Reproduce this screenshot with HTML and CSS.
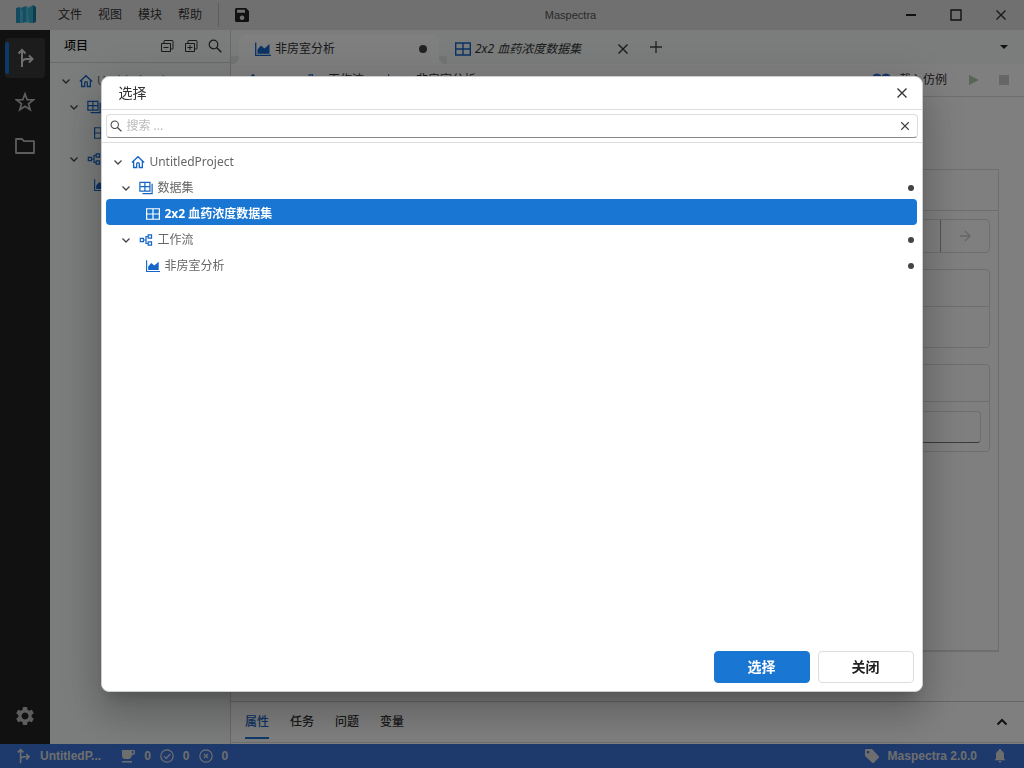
FILE: index.html
```html
<!DOCTYPE html>
<html lang="zh-CN">
<head>
<meta charset="utf-8">
<meta name="viewport" content="width=device-width, initial-scale=1">
<title>Maspectra</title>
<link rel="stylesheet" href="styles.css">
</head>
<body>
<svg class="defs" aria-hidden="true">
  <symbol id="home" viewBox="0 0 16 16"><path d="M1 8.500 8 2l7 6.500M3 7v7.300h3.500V10q0-1.200 1.500-1.200T9.500 10v4.300H13V7" fill="none" stroke="currentColor" stroke-width="1.500"/></symbol>
  <symbol id="tables" viewBox="0 0 16 16"><path d="M1 1.500h11.500v10H1zM6.750 1.500v10M1 6.500h11.500M15 3v11.500H4" fill="none" stroke="currentColor" stroke-width="1.400"/></symbol>
  <symbol id="table" viewBox="0 0 16 16"><path d="M.7 2h14.600v12H.7zM8 2v12M.7 8h14.600" fill="none" stroke="currentColor" stroke-width="1.400"/></symbol>
  <symbol id="flow" viewBox="0 0 16 16"><path d="M1.500 6.200h3.600v3.600H1.500zM10.500 2.200h3.800v3.600h-3.800zM10.500 10.200h3.800v3.600h-3.800zM5 8h3M10.500 4H8v8h2.500" fill="none" stroke="currentColor" stroke-width="1.400"/></symbol>
  <symbol id="chart" viewBox="0 0 16 16"><path d="M.7 1.500v12.800H16" fill="none" stroke="currentColor" stroke-width="1.300"/><path d="M2.500 12.700V8.500l3.500-4 3.500 3L14.500 3v9.700z" fill="currentColor"/></symbol>
  <symbol id="down" viewBox="0 0 10 10"><path d="M1.500 3.500 5 7l3.500-3.500" fill="none" stroke="currentColor" stroke-width="1.300"/></symbol>
  <symbol id="cross" viewBox="0 0 12 12"><path d="m1.500 1.500 9 9m0-9-9 9" fill="none" stroke="currentColor" stroke-width="1.400"/></symbol>
  <symbol id="search" viewBox="0 0 14 14"><circle cx="5.500" cy="5.500" r="4.300" fill="none" stroke="currentColor" stroke-width="1.200"/><path d="m8.500 8.500 4.800 4.800" stroke="currentColor" stroke-width="1.500"/></symbol>
  <symbol id="branch" viewBox="0 0 20 20"><path d="M7 19V2M3.500 5.500 7 2l3.500 3.500M7 15q0-4 5-4h5M14 7.500l3.500 3.500-3.500 3.500" fill="none" stroke="currentColor" stroke-width="2"/></symbol>
</svg>
<div class="app">
  <header class="titlebar">
    <svg class="logo" viewBox="0 0 20 20"><path d="M0 3l4-1v16H0z" fill="#2795c0"/><path d="m4 2 3 2v14H4z" fill="#4ebcd8"/><path d="m5 3 5-2v5l-3 3V6z" fill="#2b9cc5"/><path d="M7 8l3-2v11l-3 1z" fill="#2b9cc5"/><path d="m10 1 3 2v14l-3 1z" fill="#50bdd8"/><path d="m12 3 5-3v18h-4z" fill="#39afd0"/><path d="m17 0 3 2v15l-3 1z" fill="#1b789f"/></svg>
    <nav class="menu"><button>文件</button><button>视图</button><button>模块</button><button>帮助</button></nav>
    <button class="save" aria-label="保存"><svg viewBox="0 0 14 14"><path d="M1.500 0H11l3 3v9.500q0 1.500-1.500 1.500h-11Q0 14 0 12.500v-11Q0 0 1.500 0zM2 1.800v3h8v-3zM7 7.500a2.300 2.300 0 1 0 .1 0z" fill="#222" fill-rule="evenodd"/></svg></button>
    <span class="apptitle">Maspectra</span>
    <div class="winbtns">
      <button aria-label="最小化"><svg viewBox="0 0 12 12"><path d="M1 6h10" stroke="#222" stroke-width="2"/></svg></button>
      <button aria-label="最大化"><svg viewBox="0 0 12 12"><path d="M1 1h10v10H1z" fill="none" stroke="#222" stroke-width="1.400"/></svg></button>
      <button aria-label="关闭窗口"><svg viewBox="0 0 12 12"><use href="#cross"/></svg></button>
    </div>
  </header>
  <div class="body">
    <nav class="activity">
      <button class="act active" aria-label="项目"><svg class="i20"><use href="#branch"/></svg></button>
      <button class="act" aria-label="收藏"><svg class="i20" viewBox="0 0 20 20"><path d="m10 1.800 2.200 5.900 6.200.2-4.900 3.900 1.700 6L10 14.300l-5.200 3.500 1.700-6L1.600 7.900l6.200-.2z" fill="none" stroke="currentColor" stroke-width="1.700"/></svg></button>
      <button class="act" aria-label="文件夹"><svg class="i20" viewBox="0 0 20 20"><path d="M1 3h6l2 2.200h10V17H1z" fill="none" stroke="currentColor" stroke-width="1.800" stroke-linejoin="round"/></svg></button>
      <button class="act last" aria-label="设置"><svg class="i20" viewBox="0 0 20 20"><path d="M8 1h4l.5 2.800 1.700 1 2.600-1 2 3.400-2.200 1.800v2l2.200 1.800-2 3.400-2.600-1-1.700 1L12 19H8l-.5-2.800-1.700-1-2.600 1-2-3.400L3.400 11V9L1.200 7.200l2-3.400 2.600 1 1.700-1zM10 6.500a3.500 3.500 0 1 0 .1 0z" fill="currentColor" fill-rule="evenodd"/></svg></button>
    </nav>
    <aside class="side">
      <div class="sidehead"><h2>项目</h2>
        <button aria-label="全部折叠"><svg viewBox="0 0 14 14"><path d="M4 4.500V2q0-.5.500-.5h8q.5 0 .5.500v7.500q0 .5-.5.500H10.500M1.500 4.500h9v8h-9zM3.500 8.500h5" fill="none" stroke="currentColor"/></svg></button>
        <button aria-label="全部展开"><svg viewBox="0 0 14 14"><path d="M4 4.500V2q0-.5.500-.5h8q.5 0 .5.500v7.500q0 .5-.5.500H10.500M1.500 4.500h9v8h-9zM3.500 8.500h5M6 6v5" fill="none" stroke="currentColor"/></svg></button>
        <button aria-label="搜索项目"><svg viewBox="0 0 14 14"><use href="#search"/></svg></button>
      </div>
      <ul class="tree">
        <li class="row"><svg class="chev"><use href="#down"/></svg><svg class="ic"><use href="#home"/></svg><span>UntitledProject</span></li>
        <li class="row l1"><svg class="chev"><use href="#down"/></svg><svg class="ic"><use href="#tables"/></svg><span>数据集</span></li>
        <li class="row l2"><svg class="ic"><use href="#table"/></svg><span>2x2 血药浓度数据集</span></li>
        <li class="row l1"><svg class="chev"><use href="#down"/></svg><svg class="ic"><use href="#flow"/></svg><span>工作流</span></li>
        <li class="row l2"><svg class="ic"><use href="#chart"/></svg><span>非房室分析</span></li>
      </ul>
    </aside>
    <main class="main">
      <div class="tabs">
        <div class="tab on"><svg class="i16"><use href="#chart"/></svg><span>非房室分析</span><i class="dot"></i></div>
        <div class="tab"><svg class="i16"><use href="#table"/></svg><em>2x2 血药浓度数据集</em><button aria-label="关闭标签"><svg viewBox="0 0 12 12"><use href="#cross"/></svg></button></div>
        <button class="add" aria-label="新标签"><svg viewBox="0 0 12 12"><path d="M6 0v12M0 6h12" stroke="#444" stroke-width="1.300"/></svg></button>
        <button class="more" aria-label="标签列表"><svg viewBox="0 0 8 4"><path d="M0 0h8L4 4z" fill="#222"/></svg></button>
      </div>
      <div class="toolbar">
        <div class="crumbs">
          <div class="crumb"><svg class="ic"><use href="#home"/></svg></div>
          <div class="crumb"><svg class="ic"><use href="#flow"/></svg><span>工作流</span></div>
          <div class="crumb"><svg class="ic"><use href="#chart"/></svg><span>非房室分析</span></div>
        </div>
        <button class="load"><svg class="i18" viewBox="0 0 18 14"><path d="M0 2q4-3 8 0v11H0zM9 2q4-3 8 0v11H9z" fill="#2c6ed5"/></svg>载入仿例</button>
        <button class="play" aria-label="运行"><svg viewBox="0 0 10 10"><path d="M0 0l10 5-10 5z" fill="#b5c8b1"/></svg></button>
        <button class="stop" aria-label="停止"></button>
      </div>
      <div class="content">
        <section class="card">
          <div class="cardhead"></div>
          <div class="cardbody">
            <div class="picker"><span></span><button aria-label="前往"><svg viewBox="0 0 12 12"><path d="M1 6h10M6 1l5 5-5 5" fill="none" stroke="#ccc" stroke-width="1.300"/></svg></button></div>
            <div class="group"><div class="ghead"></div><div class="gshort"></div></div>
            <div class="group"><div class="ghead"></div><div class="gfield"><input type="text" aria-label="参数"></div></div>
          </div>
        </section>
      </div>
      <div class="panel">
        <div class="ptabs"><button class="on">属性</button><button>任务</button><button>问题</button><button>变量</button><button class="up" aria-label="展开面板"><svg viewBox="0 0 12 12"><path d="m1.500 8.500 4.500-4.500 4.500 4.500" fill="none" stroke="#222" stroke-width="2"/></svg></button></div>
      </div>
    </main>
  </div>
  <footer class="status">
    <svg class="i16 br"><use href="#branch"/></svg><span class="proj">UntitledP...</span>
    <svg class="i14" viewBox="0 0 14 14"><path d="M1 1h12q1 0 1 1v2q0 2-3 2-1 4-3 4H4q-3 0-3-4zm10 1v2.500h1.500V2zM1 12h10v1.500H1z" fill="currentColor" fill-rule="evenodd"/></svg><span>0</span>
    <svg class="i14" viewBox="0 0 14 14"><circle cx="7" cy="7" r="6.200" fill="none" stroke="currentColor" stroke-width="1.200"/><path d="m4 7.200 2.200 2.300L10.200 5" fill="none" stroke="currentColor" stroke-width="1.200"/></svg><span>0</span>
    <svg class="i14" viewBox="0 0 14 14"><circle cx="7" cy="7" r="6.200" fill="none" stroke="currentColor" stroke-width="1.200"/><path d="m5 5 4 4m0-4L5 9" stroke="currentColor" stroke-width="1.200"/></svg><span>0</span>
    <svg class="i14 tag" viewBox="0 0 14 14"><path d="M1 0h6l7 7.500q.5.500 0 1L8.500 14q-.5.500-1 0L0 7V1q0-1 1-1zM3 1.800a1.300 1.300 0 1 0 .1 0z" fill="currentColor" fill-rule="evenodd"/></svg><span class="ver">Maspectra 2.0.0</span>
    <svg class="i12" viewBox="0 0 12 14"><path d="M5 0h2v1.500q3 .5 3 4.500v3.500l1.500 1.800H.5L2 9.500V6q0-4 3-4.500zM4.500 12h3q0 1.500-1.500 1.500T4.500 12z" fill="currentColor"/></svg>
  </footer>
</div>
<div class="backdrop">
  <div class="dialog" role="dialog" aria-modal="true" aria-labelledby="dlg">
    <div class="dhead"><h1 id="dlg">选择</h1><button aria-label="关闭对话框"><svg viewBox="0 0 12 12"><use href="#cross"/></svg></button></div>
    <div class="dsearch"><label class="box"><svg viewBox="0 0 14 14"><use href="#search"/></svg><input type="text" placeholder="搜索 ..." aria-label="搜索"><button aria-label="清除"><svg viewBox="0 0 12 12"><use href="#cross"/></svg></button></label></div>
    <ul class="tree dtree">
      <li class="row"><svg class="chev"><use href="#down"/></svg><svg class="ic"><use href="#home"/></svg><span>UntitledProject</span></li>
      <li class="row l1"><svg class="chev"><use href="#down"/></svg><svg class="ic"><use href="#tables"/></svg><span>数据集</span><i class="mark"></i></li>
      <li class="row l2 sel"><svg class="ic"><use href="#table"/></svg><span>2x2 血药浓度数据集</span></li>
      <li class="row l1"><svg class="chev"><use href="#down"/></svg><svg class="ic"><use href="#flow"/></svg><span>工作流</span><i class="mark"></i></li>
      <li class="row l2"><svg class="ic"><use href="#chart"/></svg><span>非房室分析</span><i class="mark"></i></li>
    </ul>
    <div class="dfoot"><button class="primary">选择</button><button>关闭</button></div>
  </div>
</div>
</body>
</html>
```
FILE: styles.css
```css
* { box-sizing: border-box; }
body { margin: 0; font: 12px/18px "Noto Sans", "Noto Sans CJK SC", sans-serif; color: #333; overflow: hidden; }
button { border: 0; padding: 0; background: none; font: inherit; color: inherit; display: flex; align-items: center; justify-content: center; }
svg { display: block; flex: none; }
h1, h2, ul { margin: 0; padding: 0; }
.defs { display: none; }
.i20 { width: 20px; height: 20px; }
.i18 { width: 18px; height: 14px; }
.i16 { width: 16px; height: 16px; }
.i14 { width: 14px; height: 14px; }
.i12 { width: 12px; height: 14px; }

.app { height: 100vh; display: flex; flex-direction: column; background: #fff; }
.titlebar { flex: none; height: 30px; display: flex; align-items: center; background: #e0e0e0; padding: 0 1px 0 16px; }
.logo { width: 20px; height: 20px; }
.menu { display: flex; gap: 16px; padding: 0 16px 0 22px; }
.save { height: 24px; border-left: 1px solid #bbb; padding-left: 16px; }
.save svg { width: 14px; height: 14px; }
.apptitle { flex: 1; text-align: center; font: 11px/14px "Liberation Sans", Arial, sans-serif; padding-left: 4px; color: #555; }
.winbtns { display: flex; }
.winbtns button { width: 45px; height: 30px; }
.winbtns svg { width: 12px; height: 12px; }

.body { flex: 1; min-height: 0; display: flex; }
.activity { flex: none; width: 50px; background: #222; color: #bbb; display: flex; flex-direction: column; align-items: center; gap: 4px; padding: 8px 0; }
.act { width: 40px; height: 40px; border-radius: 4px; }
.act.active { position: relative; background: #383838; color: #ddd; }
.act.active::before { content: ""; position: absolute; left: 0; top: 4px; bottom: 4px; width: 4px; border-radius: 2px; background: #1976d2; }
.act.last { margin-top: auto; }

.side { flex: none; width: 181px; background: #f6faf9; border-right: 1px solid #d0d4d3; overflow: hidden; }
.sidehead { height: 33px; display: flex; align-items: center; gap: 10px; padding: 0 8px 0 14px; border-bottom: 1px solid #d4d8d7; }
.sidehead h2 { flex: 1; font-size: 12px; font-weight: 500; color: #111; }
.sidehead svg { width: 14px; height: 14px; }
.tree { list-style: none; padding: 4px 4px; }
.side .tree { padding-top: 3px; }
.row { height: 26px; display: flex; align-items: center; gap: 4px; padding-top: 4px; padding-left: 7px; white-space: nowrap; color: #666; border-radius: 4px; }
.row.l1 { padding-left: 15px; }
.row.l2 { padding-left: 40px; }
.chev { width: 10px; height: 10px; margin-right: 4px; color: #444; }
.ic { width: 14px; height: 14px; color: #1565c8; }

.main { flex: 1; min-width: 0; display: flex; flex-direction: column; }
.tabs { flex: none; height: 34px; display: flex; align-items: center; background: #f6faf9; padding-left: 8px; }
.tab { height: 30px; align-self: flex-end; display: flex; align-items: center; gap: 4px; width: 200px; padding: 0 10px 0 16px; }
.tab svg.i16 { color: #1565c8; }
.tab.on { position: relative; background: #fff; border-radius: 8px 8px 0 0; padding-right: 12px; }
.tab.on::before, .tab.on::after { content: ""; position: absolute; bottom: 0; width: 8px; height: 24px; }
.tab.on::before { right: 100%; background: radial-gradient(circle at 0 16px, #e6eae9 8px, #fff 9px); clip-path: inset(16px 0 0 0); }
.tab.on::after { left: 100%; background: radial-gradient(circle at 8px 16px, #e6eae9 8px, #fff 9px); clip-path: inset(16px 0 0 0); }
.tab span, .tab em { flex: 1; white-space: nowrap; }
.dot { width: 8px; height: 8px; border-radius: 50%; background: #444; }
.tab button svg, .add svg { width: 12px; height: 12px; }
.add { padding-left: 11px; }
.more { margin-left: auto; padding-right: 16px; }
.more svg { width: 8px; height: 4px; }
.toolbar { flex: none; height: 33px; display: flex; align-items: center; border-bottom: 1px solid #ddd; padding: 0 15px; }
.crumbs { flex: 1; display: flex; align-items: center; gap: 24px; }
.crumb { display: flex; align-items: center; gap: 14px; }
.crumb:first-child { padding-right: 16px; }
.load { gap: 8px; }
.play { margin: 0 20px 0 22px; }
.play svg { width: 10px; height: 10px; }
.stop { width: 10px; height: 10px; background: #ccc; }
.content { flex: 1; min-height: 0; padding: 72px 25px 49px 24px; }
.card { height: 100%; border: 1px solid #ddd; border-bottom-width: 2px; }
.cardhead { height: 41px; border-bottom: 1px solid #ddd; }
.cardbody { padding: 8px; display: flex; flex-direction: column; gap: 16px; }
.picker { height: 34px; border: 1px solid #ddd; border-radius: 4px; display: flex; }
.picker span { flex: 1; border-right: 1px solid #aaa; }
.picker button { width: 48px; }
.picker svg { width: 12px; height: 12px; }
.group { border: 1px solid #ddd; border-radius: 4px; }
.ghead { height: 37px; border-bottom: 1px solid #ddd; }
.gshort { height: 40px; }
.gfield { padding: 9px 8px 8px; display: flex; }
.gfield input { flex: 1; height: 32px; border: 1px solid #ddd; border-bottom-color: #777; border-radius: 4px; }
.panel { flex: none; height: 43px; border-top: 1px solid #ccc; }
.ptabs { height: 41px; display: flex; align-items: center; gap: 21px; padding: 0 16px 0 14px; border-bottom: 1px solid #ddd; }
.ptabs button { height: 34px; padding-top: 2px; border-bottom: 2px solid transparent; font-weight: 500; }
.ptabs .on { color: #1565c0; border-bottom-color: #1976d2; }
.ptabs .up { margin-left: auto; }
.up svg { width: 12px; height: 12px; }

.status { flex: none; height: 24px; display: flex; align-items: center; background: #3c74d8; color: #ddd; font: bold 12px/16px "Liberation Sans", Arial, sans-serif; padding: 0 18px 0 15px; gap: 9px; }
.proj { margin-right: 11px; }
.tag { margin-left: auto; }
.ver { margin-right: 8px; }

.backdrop { position: fixed; inset: 0; background: rgba(0, 0, 0, .5); display: grid; place-items: center; }
.dialog { box-sizing: content-box; width: 80%; height: 80%; display: flex; flex-direction: column; background: #fff; border: 1px solid #ccc; border-radius: 8px; box-shadow: 0 11px 15px -7px rgba(0, 0, 0, .2), 0 24px 38px 3px rgba(0, 0, 0, .14), 0 9px 46px 8px rgba(0, 0, 0, .12); }
.dhead { flex: none; height: 33px; display: flex; align-items: center; justify-content: space-between; padding: 0 14px 0 16px; border-bottom: 1px solid #ddd; }
.dhead h1 { font-size: 14px; font-weight: 400; }
.dhead svg { width: 12px; height: 12px; }
.dsearch { flex: none; padding: 4px; border-bottom: 1px solid #ddd; }
.box { height: 24px; display: flex; align-items: center; border: 1px solid #ddd; border-bottom-color: #888; border-radius: 4px; padding: 0 7px 0 3px; gap: 4px; color: #444; }
.box svg { width: 12px; height: 12px; }
.box button svg { width: 10px; height: 10px; }
.box input { flex: 1; min-width: 0; border: 0; outline: 0; padding: 0; background: none; font: inherit; }
.box input::placeholder { color: #bbb; }
.dtree { flex: 1; padding-right: 5px; }
.row .mark { width: 6px; height: 6px; border-radius: 50%; background: #444; margin-left: auto; margin-right: 3px; }
.sel, .sel .ic { background: #1976d2; color: #fff; font-weight: 700; }
.dfoot { flex: none; display: flex; justify-content: flex-end; gap: 8px; padding: 8px; }
.dfoot button { width: 96px; height: 32px; border: 1px solid #ddd; border-radius: 4px; font-size: 14px; font-weight: 600; color: #222; }
.dfoot .primary { background: #1976d2; border-color: #1976d2; color: #fff; }
```
